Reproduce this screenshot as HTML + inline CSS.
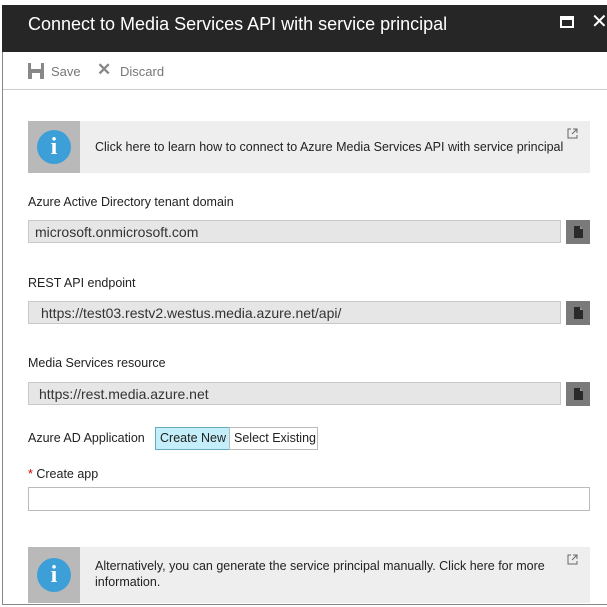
<!DOCTYPE html>
<html><head><style>
*{box-sizing:border-box;margin:0;padding:0}
body{width:607px;height:607px;background:#fff;font-family:"Liberation Sans",sans-serif;position:relative;overflow:hidden;color:#222}
.a{position:absolute}
.frame{left:2px;top:5px;width:610px;height:600px;border:1px solid #888}
.hdr{left:2px;top:5px;width:607px;height:47px;background:#262626;color:#fff;font-size:18px;padding:9px 0 0 26px}
.tb{left:3px;top:89px;width:606px;height:1px;background:#ccc}
.tbt{font-size:13px;color:#777;top:64px}
.info{left:28px;width:562px;background:#eeeeee}
.ic{left:0;top:0;width:52px;height:100%;background:#b9b9b9}
.circ{width:34px;height:34px;border-radius:50%;background:#3d9fd7;color:#fff;font-family:"Liberation Serif",serif;font-weight:bold;font-size:24px;text-align:center;line-height:34px;position:absolute;left:9px}
.lbl{left:28px;font-size:12.5px;color:#222}
.inp{left:28px;width:533px;height:23px;background:#e6e6e6;border:1px solid #c8c8c8;font-size:14px;color:#333;padding:3px 0 0 6px}
.cp{left:566px;width:24px;height:24px;background:#7a7a7a}
.ext{position:absolute;left:539px;top:7px}
</style></head><body>
<div class="a frame"></div>
<div class="a hdr">Connect to Media Services API with service principal</div>
<div class="a" style="left:560px;top:16px;width:14px;height:12px;border:2px solid #fff;border-top-width:4px"></div>
<div class="a" style="left:591px;top:9px;color:#fff;font-size:20px">✕</div>
<div class="a" style="left:28px;top:63px;width:16px;height:16px;background:#888"><div class="a" style="left:3px;top:0;width:10px;height:6px;background:#fff"></div><div class="a" style="left:4px;top:10px;width:8px;height:6px;background:#fff"></div></div>
<div class="a tbt" style="left:51px">Save</div>
<div class="a tbt" style="left:97px;font-size:17px;top:60px;color:#888;font-weight:bold">✕</div>
<div class="a tbt" style="left:120px">Discard</div>
<div class="a tb"></div>

<div class="a info" style="top:121px;height:52px"><div class="a ic"><div class="circ" style="top:9px">i</div></div>
<div class="a" style="left:67px;top:19px;font-size:12.5px">Click here to learn how to connect to Azure Media Services API with service principal</div>
<svg class="ext" width="11" height="11" viewBox="0 0 11 11"><path d="M4 1H1v9h9V7M6 1h4v4M10 1L5 6" fill="none" stroke="#666" stroke-width="1"/></svg></div>

<div class="a lbl" style="top:195px">Azure Active Directory tenant domain</div>
<div class="a inp" style="top:220px">microsoft.onmicrosoft.com</div>
<div class="a cp" style="top:220px"><svg width="24" height="24"><path d="M8 6h6l3 3v9H8z" fill="#2a2a2a"/><path d="M14 6v3h3" fill="#999"/></svg></div>
<div class="a lbl" style="top:276px">REST API endpoint</div>
<div class="a inp" style="top:301px;padding-left:12px">https://test03.restv2.westus.media.azure.net/api/</div>
<div class="a cp" style="top:301px"><svg width="24" height="24"><path d="M8 6h6l3 3v9H8z" fill="#2a2a2a"/><path d="M14 6v3h3" fill="#999"/></svg></div>
<div class="a lbl" style="top:356px">Media Services resource</div>
<div class="a inp" style="top:382px;padding-left:10px">https://rest.media.azure.net</div>
<div class="a cp" style="top:382px"><svg width="24" height="24"><path d="M8 6h6l3 3v9H8z" fill="#2a2a2a"/><path d="M14 6v3h3" fill="#999"/></svg></div>

<div class="a lbl" style="top:431px">Azure AD Application</div>
<div class="a" style="left:155px;top:427px;width:75px;height:23px;background:#c4eef9;border:1px solid #6ab;font-size:12.5px;padding:3px 0 0 4px">Create New</div>
<div class="a" style="left:229px;top:427px;width:89px;height:23px;background:#fff;border:1px solid #bbb;font-size:12.5px;padding:3px 0 0 4px">Select Existing</div>
<div class="a lbl" style="top:467px"><span style="color:#c00">*</span> Create app</div>
<div class="a" style="left:28px;top:487px;width:562px;height:24px;border:1px solid #bbb"></div>

<div class="a info" style="top:547px;height:56px"><div class="a ic"><div class="circ" style="top:11px">i</div></div>
<div class="a" style="left:67px;top:11px;font-size:12.5px;line-height:16px;width:470px">Alternatively, you can generate the service principal manually. Click here for more information.</div>
<svg class="ext" width="11" height="11" viewBox="0 0 11 11"><path d="M4 1H1v9h9V7M6 1h4v4M10 1L5 6" fill="none" stroke="#666" stroke-width="1"/></svg></div>
</body></html>
